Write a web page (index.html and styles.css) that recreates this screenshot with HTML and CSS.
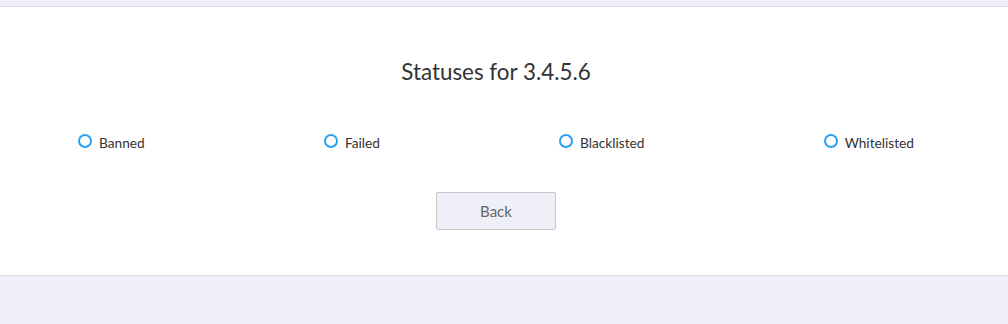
FILE: index.html
```html
<!DOCTYPE html>
<html>
<head>
<meta charset="utf-8">
<link rel="stylesheet" href="styles.css">
</head>
<body>
<div class="topbar"></div>
<main class="panel">
  <h1 class="title">Statuses for 3.4.5.6</h1>
  <div class="statuses">
    <label class="status"><span class="radio"></span><span class="label">Banned</span></label>
    <label class="status"><span class="radio"></span><span class="label">Failed</span></label>
    <label class="status"><span class="radio"></span><span class="label">Blacklisted</span></label>
    <label class="status"><span class="radio"></span><span class="label">Whitelisted</span></label>
  </div>
  <div class="actions">
    <button class="back">Back</button>
  </div>
</main>
</body>
</html>
```
FILE: styles.css
```css
html, body {
  margin: 0;
  padding: 0;
}
body {
  background: #efeff8;
  font-family: "Lato", "Open Sans", sans-serif;
  color: #333;
  height: 324px;
  overflow: hidden;
}
.topbar {
  height: 6px;
  background: #efeff8;
  border-bottom: 1px solid #dcdbe8;
}
.panel {
  background: #fff;
  height: 268px;
  border-bottom: 1px solid #dcdbe8;
  padding-right: 16px;
  display: flex;
  flex-direction: column;
  align-items: stretch;
}
.title {
  margin: 52px 0 0;
  font-size: 22.4px;
  font-weight: 400;
  line-height: 26px;
  text-align: center;
  color: #333;
}
.statuses {
  margin-top: 47px;
  display: flex;
  justify-content: space-between;
  padding: 0 78px 0 78px;
  height: 20px;
  align-items: center;
}
.status {
  display: flex;
  align-items: center;
  gap: 7px;
  font-size: 13.7px;
  color: #333;
}
.radio {
  width: 10px;
  height: 10px;
  border: 2px solid #2a9ff4;
  border-radius: 50%;
  box-sizing: content-box;
  margin-top: -3px;
}
.actions {
  margin-top: 40px;
  display: flex;
  justify-content: center;
}
.back {
  width: 120px;
  height: 38px;
  background: #efeff8;
  border: 1px solid #c8c8cc;
  border-radius: 2px;
  font-family: inherit;
  font-size: 15px;
  color: #666;
  padding: 0;
}
```
